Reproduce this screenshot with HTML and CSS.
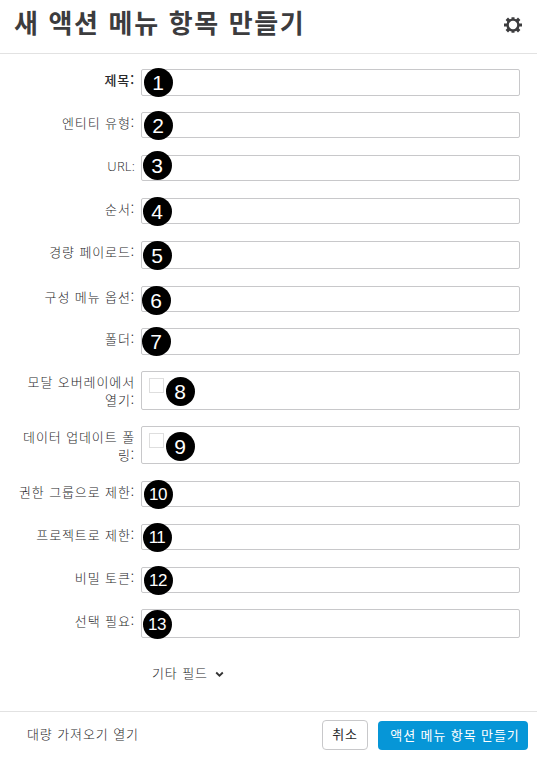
FILE: index.html
```html
<!DOCTYPE html>
<html lang="ko">
<head>
<meta charset="utf-8">
<title>새 액션 메뉴 항목 만들기</title>
<link rel="stylesheet" href="styles.css">
</head>
<body>
<div class="dialog">
  <header class="header">
    <h1 class="title">새 액션 메뉴 항목 만들기</h1>
    <svg class="gear" width="20" height="18" viewBox="0 0 20 18" fill="none" stroke="#3d3d3f">
      <circle cx="10" cy="9" r="5.4" stroke-width="2.4"/>
      <path d="M10 3.5V1.2M10 14.5v2.3M4.2 9H1M15.8 9H19" stroke-width="3"/>
      <path d="M6 5L3.8 2.8M14 5l2.2-2.2M6 13l-2.2 2.2M14 13l2.2 2.2" stroke-width="3.4"/>
    </svg>
  </header>
  <main class="form">
    <label class="label required">제목:</label><div class="field h27"><span class="badge b1">1</span></div>
    <label class="label">엔티티 유형:</label><div class="field"><span class="badge b2">2</span></div>
    <label class="label url">URL:</label><div class="field"><span class="badge b3">3</span></div>
    <label class="label">순서:</label><div class="field"><span class="badge b4">4</span></div>
    <label class="label">경량 페이로드:</label><div class="field h28"><span class="badge b5">5</span></div>
    <label class="label">구성 메뉴 옵션:</label><div class="field"><span class="badge b6">6</span></div>
    <label class="label">폴더:</label><div class="field h27"><span class="badge b7">7</span></div>
    <label class="label">모달 오버레이에서<br>열기:</label><div class="field h39"><i class="check"></i><span class="badge b8">8</span></div>
    <label class="label">데이터 업데이트 폴<br>링:</label><div class="field h38"><i class="check"></i><span class="badge b9">9</span></div>
    <label class="label">권한 그룹으로 제한:</label><div class="field"><span class="badge wide b10">10</span></div>
    <label class="label">프로젝트로 제한:</label><div class="field"><span class="badge wide b11">11</span></div>
    <label class="label">비밀 토큰:</label><div class="field"><span class="badge wide b12">12</span></div>
    <label class="label last">선택 필요:</label><div class="field h29"><span class="badge wide b13">13</span></div>
  </main>
  <div class="more"><span>기타 필드</span>
    <svg class="chevron" width="9" height="7" viewBox="0 0 9 7" fill="none" stroke="#333" stroke-width="1.8"><path d="M1.2 1.5L4.5 4.7L7.8 1.5"/></svg>
  </div>
  <footer class="footer">
    <span class="bulk">대량 가져오기 열기</span>
    <button class="btn cancel">취소</button>
    <button class="btn primary">액션 메뉴 항목 만들기</button>
  </footer>
</div>
</body>
</html>
```
FILE: styles.css
```css
* { box-sizing: border-box; }
body {
  margin: 0;
  background: #fff;
  color: #29292b;
  font: 13px/18px "Noto Sans CJK KR", sans-serif;
  letter-spacing: 0.9px;
}
.dialog { width: 537px; height: 757px; display: flex; flex-direction: column; overflow: hidden; }
.header {
  height: 54px;
  padding: 0 14px 9px 14px;
  display: flex;
  align-items: center;
  justify-content: space-between;
  border-bottom: 1px solid #e2e2e2;
}
.title { margin: 0; color: #3c3c3e; font-size: 26px; line-height: 40px; font-weight: 700; letter-spacing: 1.65px; white-space: nowrap; }
.gear { margin: 6px 0 0; }
.form {
  display: grid;
  grid-template-columns: 135px 379px;
  column-gap: 6px;
  grid-template-rows: 43px 43px 43px 43px 45px 42px 43px 55px 55px 43px 43px 42px 29px;
  align-items: start;
  margin-top: 15px;
}
.label { text-align: right; padding-top: 2px; white-space: nowrap; font-weight: 300; }
.label.required { font-weight: 500; }
.label.url { font-family: "Open Sans", sans-serif; letter-spacing: 0.2px; }
.label.last { padding-top: 3px; }
.field { position: relative; height: 26px; border: 1px solid #c8c8ca; border-radius: 2px; }
.h27 { height: 27px; }
.h28 { height: 28px; }
.h29 { height: 29px; }
.h38 { height: 38px; }
.h39 { height: 39px; }
.check { display: block; width: 15px; height: 15px; margin: 6px 0 0 7px; border: 1px solid #dedede; }
.badge {
  position: absolute;
  left: 0.5px;
  top: -2px;
  width: 29px;
  height: 29px;
  border-radius: 50%;
  background: #000;
  color: #fff;
  font: 21px/30px "Liberation Sans", sans-serif;
  letter-spacing: 0;
  text-align: center;
}
.wide { font-size: 17px; letter-spacing: -0.5px; }
.b1, .b2 { left: 1.5px; }
.b3 { top: -5px; }
.b5 { top: -1px; }
.b6 { left: -0.5px; top: -1px; }
.b7 { left: -0.5px; }
.b8, .b9 { left: 23.5px; top: 5px; }
.b10, .b12 { left: 1.5px; }
.b13 { top: 0; }
.more { display: flex; align-items: center; gap: 7px; height: 20px; margin: 25px 0 0 152px; font-weight: 300; }
.chevron { margin-top: 3px; }
.footer {
  display: flex;
  align-items: flex-start;
  height: 46px;
  margin-top: 28px;
  border-top: 1px solid #e2e2e2;
  padding: 8px 9px 0 27px;
}
.bulk { margin: 5px auto 0 0; font-weight: 300; }
.btn { font: inherit; letter-spacing: 0.9px; color: inherit; padding: 0 0 2px; border-radius: 4px; white-space: nowrap; }
.cancel { width: 46px; height: 30px; border: 1px solid #c8c8ca; background: #fff; margin-right: 10px; }
.primary { width: 150px; height: 29px; margin-top: 1px; border: 0; background: #0696d7; color: #fff; padding-left: 4px; }
```
